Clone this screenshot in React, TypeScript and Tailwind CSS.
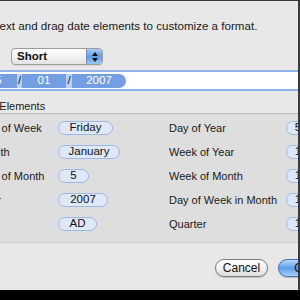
import React from 'react';

type Token = { text: string; w: number };

const leftRows: { label: string; token: Token }[] = [
  { label: 'Day of Week', token: { text: 'Friday', w: 55 } },
  { label: 'Month', token: { text: 'January', w: 62 } },
  { label: 'Day of Month', token: { text: '5', w: 31 } },
  { label: 'Year', token: { text: '2007', w: 50 } },
  { label: 'Era', token: { text: 'AD', w: 39 } },
];

const rightRows: { label: string; value: string }[] = [
  { label: 'Day of Year', value: '5' },
  { label: 'Week of Year', value: '1' },
  { label: 'Week of Month', value: '1' },
  { label: 'Day of Week in Month', value: '1' },
  { label: 'Quarter', value: '1' },
];

const Pill = ({ text, w }: Token) => (
  <div
    className="h-[14px] shrink-0 rounded-full border border-[#9db7e6] bg-[#dfe8f8] flex items-center justify-center text-[11.5px] leading-none text-[#111]"
    style={{ width: w }}
  >
    {text}
  </div>
);

const App = () => {
  return (
    <div className="w-[300px] h-[300px] overflow-hidden bg-black font-['Liberation_Sans',Arial,sans-serif]">
      <div className="h-[290px] bg-[#e8e8e8] border-t border-r-2 border-[#3a3a3a] flex flex-col overflow-hidden">
        {/* instruction */}
        <p className="mt-[18px] -ml-[32px] whitespace-nowrap text-[11.6px] leading-[14px] text-[#1a1a1a]">
          Type text and drag date elements to customize a format.
        </p>

        {/* popup */}
        <div className="mt-[15px] ml-[11px] w-[92px] h-[17px] flex rounded-[4px] border border-[#9c9c9c] bg-gradient-to-b from-white to-[#e4e4e4] overflow-hidden shadow-[0_1px_0_rgba(0,0,0,0.08)]">
          <span className="flex-1 pl-[5px] text-[11.5px] leading-[15px] font-bold text-[#111]">Short</span>
          <div className="w-[16px] bg-gradient-to-b from-[#a9cdf6] via-[#5f9be6] to-[#9cc6f3] border-l border-[#6d8fc0] flex flex-col items-center justify-center gap-[2px]">
            <svg width="6" height="4" viewBox="0 0 6 4"><path d="M3 0L6 4H0z" fill="#111" /></svg>
            <svg width="6" height="4" viewBox="0 0 6 4"><path d="M0 0H6L3 4z" fill="#111" /></svg>
          </div>
        </div>

        {/* token field */}
        <div className="mt-[5px] -ml-[10px] w-[320px] h-[21px] shrink-0 border-2 border-[#8fb3e6] bg-white flex items-center">
          <div className="-ml-[12px] h-[14px] flex items-center text-[11.5px] leading-none text-white">
            <span className="w-[37px] h-full bg-[#739fe2] flex items-center justify-center">5</span>
            <span className="w-[5px] h-full bg-[#b9d0f3] flex items-center justify-center text-[#111]">/</span>
            <span className="w-[44px] h-full bg-[#739fe2] flex items-center justify-center">01</span>
            <span className="w-[6px] h-full bg-[#b9d0f3] flex items-center justify-center text-[#111]">/</span>
            <span className="w-[54px] h-full bg-[#739fe2] rounded-r-full flex items-center justify-center">2007</span>
          </div>
        </div>

        {/* group label */}
        <p className="mt-[9px] -ml-[27px] whitespace-nowrap text-[11px] leading-[13px] text-[#1a1a1a]">Date Elements</p>

        {/* group box */}
        <div className="h-[130px] shrink-0 w-[320px] bg-[#dedede] border-t border-b border-t-[#b9b9b9] border-b-[#d2d2d2] pt-[2px]">
          {leftRows.map((row, i) => (
            <div key={row.label} className="h-[24px] flex items-center -ml-[21px] text-[11px] text-[#1a1a1a] whitespace-nowrap">
              <span className="w-[79px] shrink-0">{row.label}</span>
              <div className="w-[111px] shrink-0">
                <Pill {...row.token} />
              </div>
              <span className="w-[117px] shrink-0">{rightRows[i].label}</span>
              <Pill text={rightRows[i].value} w={24} />
            </div>
          ))}
        </div>

        {/* buttons */}
        <div className="mt-[16px] ml-[215px] flex gap-[10px] shrink-0">
          <button className="w-[53px] h-[18px] shrink-0 rounded-full border border-[#7d7d7d] bg-gradient-to-b from-white via-[#f2f2f2] to-[#dcdcdc] text-[12px] leading-none text-[#111] shadow-[0_1px_1px_rgba(0,0,0,0.2)]">
            Cancel
          </button>
          <button className="w-[50px] h-[18px] shrink-0 rounded-full border border-[#3f6fb5] bg-gradient-to-b from-[#b8d8fa] via-[#5d9de9] to-[#a6cef6] text-[12px] leading-none text-[#111] shadow-[0_1px_1px_rgba(0,0,0,0.2)]">
            OK
          </button>
        </div>
      </div>
    </div>
  );
};

export default App;
